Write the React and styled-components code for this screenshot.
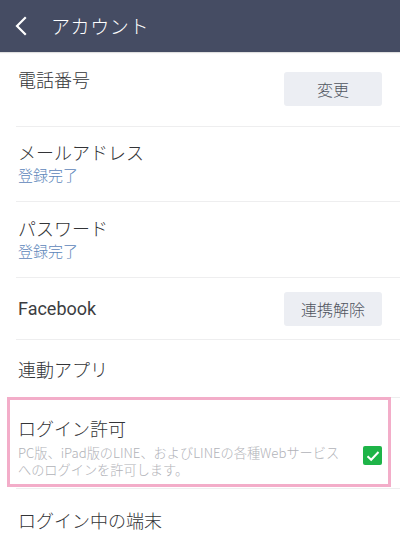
import React from "react";
import styled, { createGlobalStyle } from "styled-components";

const Global = createGlobalStyle`
  html, body { margin: 0; padding: 0; background: #ffffff; }
  body { font-family: "Noto Sans CJK JP", "Noto Sans", Roboto, sans-serif; -webkit-font-smoothing: antialiased; }
  * { box-sizing: border-box; }
`;

const Page = styled.div`
  width: 400px;
  min-height: 551px;
  background: #ffffff;
  overflow: hidden;
`;

const Header = styled.header`
  height: 52px;
  background: #454c63;
  display: flex;
  align-items: center;
  padding-left: 14px;
  gap: 21px;
  box-shadow: 0 1px 1px rgba(0, 0, 0, 0.12);
  position: relative;
  z-index: 1;
`;

const BackButton = styled.span`
  display: flex;
  align-items: center;
  width: 16px;
  height: 24px;
`;

const HeaderTitle = styled.h1`
  margin: 0;
  color: #ffffff;
  font-size: 19px;
  font-weight: 300;
  letter-spacing: 0.6px;
  line-height: 1;
  padding-bottom: 2px;
`;

const List = styled.div`
  display: flex;
  flex-direction: column;
`;

const Row = styled.div`
  position: relative;
  display: flex;
  align-items: ${(p) => (p.$top ? "flex-start" : "center")};
  justify-content: space-between;
  height: ${(p) => p.$h}px;
  padding: ${(p) => p.$pt || 0}px 18px 0 2px;
  border-bottom: ${(p) => (p.$last ? "none" : "1px solid #eeeeef")};
  margin-left: 16px;
  ${(p) =>
    p.$highlight &&
    `
    &::after {
      content: "";
      position: absolute;
      left: -9px;
      right: 9px;
      top: -1px;
      bottom: 1px;
      border: 3px solid #f3adc9;
      pointer-events: none;
    }
  `}
`;

const TextBlock = styled.div`
  display: flex;
  flex-direction: column;
  min-width: 0;
`;

const Title = styled.div`
  font-size: 18px;
  line-height: 22px;
  font-weight: ${(p) => (p.$latin ? 400 : 300)};
  color: ${(p) => (p.$latin ? "#3c3d41" : "#333437")};
  font-family: ${(p) =>
    p.$latin ? `Roboto, "Noto Sans", sans-serif` : `"Noto Sans CJK JP", "Noto Sans", sans-serif`};
`;

const Sub = styled.div`
  margin-top: 2px;
  font-size: 15px;
  line-height: 20px;
  font-weight: 300;
  color: #5d86ba;
`;

const Desc = styled.div`
  margin-top: 5px;
  display: flex;
  flex-direction: column;
`;

const DescLine = styled.span`
  font-size: 13.2px;
  line-height: 17px;
  height: 17px;
  font-weight: 300;
  color: #b1b2b8;
  white-space: nowrap;
`;

const Action = styled.button`
  align-self: center;
  width: 98px;
  height: 34px;
  margin-top: ${(p) => p.$mt || 0}px;
  border: none;
  border-radius: 3px;
  background: #eceef3;
  color: #50555f;
  font-family: "Noto Sans CJK JP", sans-serif;
  font-weight: 300;
  font-size: 16px;
  padding: 0;
  flex-shrink: 0;
`;

const Check = styled.span`
  align-self: center;
  width: 19px;
  height: 19px;
  border-radius: 2px;
  background: #1eb448;
  display: flex;
  align-items: center;
  justify-content: center;
  margin-top: 6px;
  flex-shrink: 0;
`;

export default function App() {
  return (
    <Page>
      <Global />
      <Header>
        <BackButton>
          <svg width="14" height="22" viewBox="0 0 14 22">
            <path d="M11 3 L3 11 L11 19" fill="none" stroke="#ffffff" strokeWidth="2.2" strokeLinecap="square" />
          </svg>
        </BackButton>
        <HeaderTitle>アカウント</HeaderTitle>
      </Header>
      <List>
        <Row $h={75} $top $pt={16}>
          <TextBlock>
            <Title>電話番号</Title>
          </TextBlock>
          <Action $mt={-16}>変更</Action>
        </Row>
        <Row $h={75} $top $pt={14}>
          <TextBlock>
            <Title>メールアドレス</Title>
            <Sub>登録完了</Sub>
          </TextBlock>
        </Row>
        <Row $h={76} $top $pt={15}>
          <TextBlock>
            <Title>パスワード</Title>
            <Sub>登録完了</Sub>
          </TextBlock>
        </Row>
        <Row $h={62}>
          <Title $latin>Facebook</Title>
          <Action>連携解除</Action>
        </Row>
        <Row $h={58}>
          <Title>連動アプリ</Title>
        </Row>
        <Row $h={91} $top $pt={19} $highlight>
          <TextBlock>
            <Title>ログイン許可</Title>
            <Desc>
              <DescLine>PC版、iPad版のLINE、およびLINEの各種Webサービス</DescLine>
              <DescLine>へのログインを許可します。</DescLine>
            </Desc>
          </TextBlock>
          <Check>
            <svg width="14" height="12" viewBox="0 0 14 12">
              <path d="M1.5 6.2 L5.2 9.8 L12.5 2" fill="none" stroke="#ffffff" strokeWidth="2" />
            </svg>
          </Check>
        </Row>
        <Row $h={62} $last>
          <Title>ログイン中の端末</Title>
        </Row>
      </List>
    </Page>
  );
}
